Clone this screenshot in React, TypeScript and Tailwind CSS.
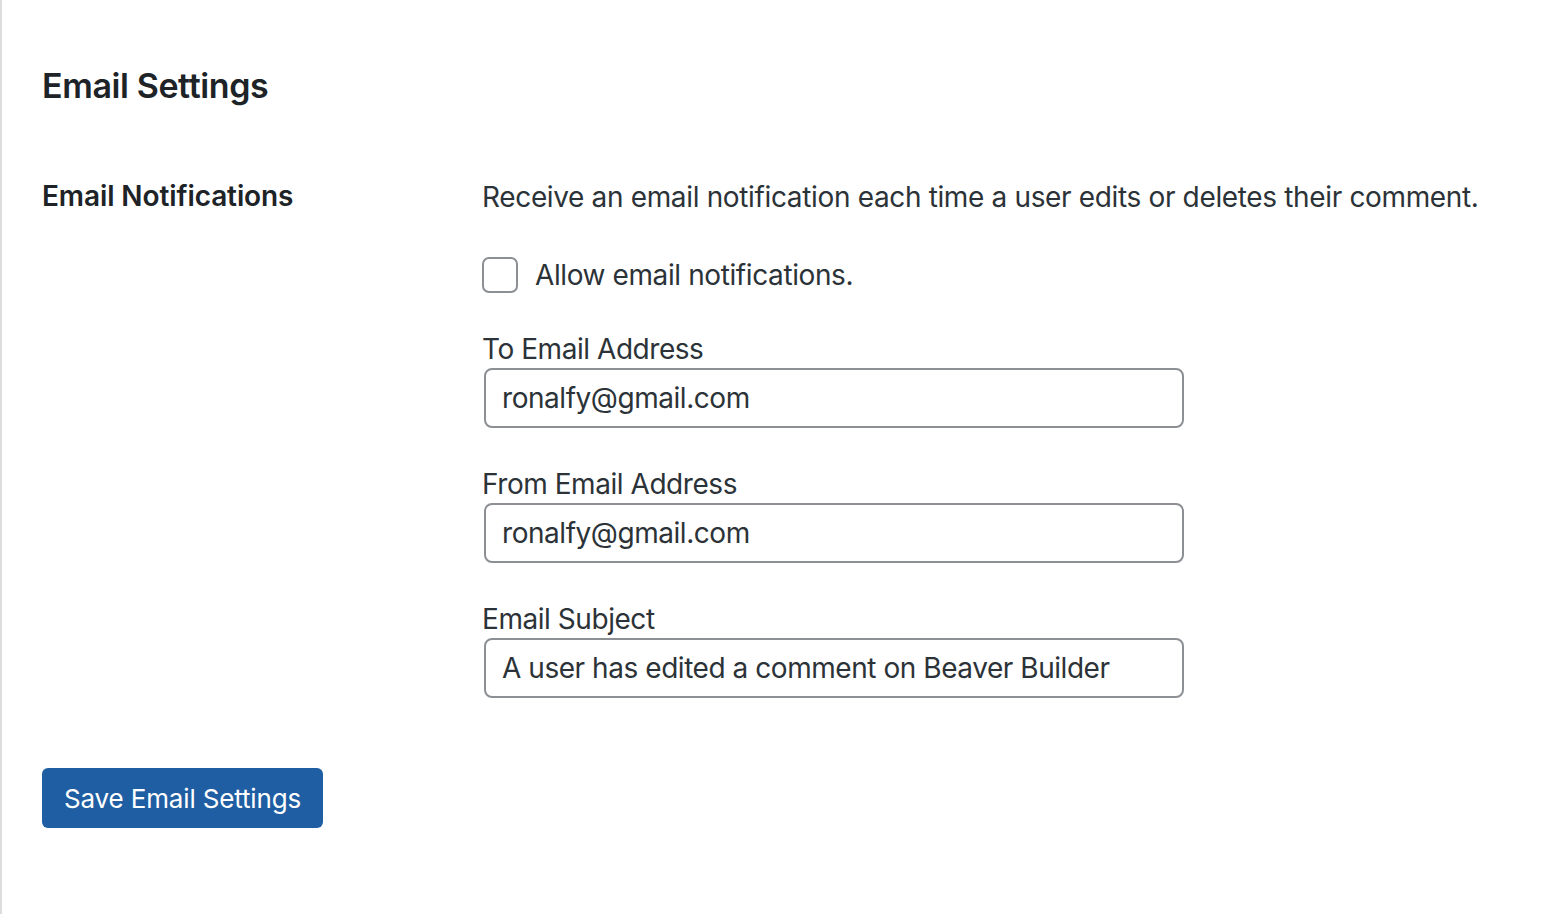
import { useState } from "react";

const fieldClass =
  "ml-[2px] block w-[700px] h-[60px] rounded-[8px] border-2 border-[#8c8f94] bg-white px-4 text-[28px] tracking-[-0.45px] text-[#2c3338] outline-none";

const labelClass = "block text-[28px] leading-[38px] tracking-[-0.45px]";

export default function App() {
  const [notify, setNotify] = useState(false);
  const [toEmail, setToEmail] = useState("ronalfy@gmail.com");
  const [fromEmail, setFromEmail] = useState("ronalfy@gmail.com");
  const [subject, setSubject] = useState("A user has edited a comment on Beaver Builder");

  return (
    <div className="min-h-screen bg-white border-l-2 border-[#dcdcde] pl-10 font-['Inter',sans-serif] text-[#2c3338]">
      <h2 className="pt-[66px] text-[34px] leading-[40px] font-semibold tracking-[-0.4px] text-[#1d2327]">
        Email Settings
      </h2>

      {/* Settings table */}
      <div className="mt-[69px] flex">
        <div className="mt-[1px] w-[440px] text-[28px] leading-[40px] font-semibold tracking-[-0.1px] text-[#1d2327]">
          Email Notifications
        </div>
        <div className="flex flex-col">
          <p className="mt-[2px] text-[28px] leading-[40px] tracking-[-0.35px]">
            Receive an email notification each time a user edits or deletes their comment.
          </p>

          <label className="mt-[38px] flex h-10 items-center gap-[17px] text-[28px] tracking-[-0.4px] cursor-pointer">
            <input
              type="checkbox"
              checked={notify}
              onChange={(e) => setNotify(e.target.checked)}
              className="appearance-none w-9 h-9 rounded-[7px] border-2 border-[#8c8f94] bg-white checked:bg-[#2271b1]"
            />
            Allow email notifications.
          </label>

          <label className={`mt-[35px] ${labelClass}`}>To Email Address</label>
          <input className={fieldClass} value={toEmail} onChange={(e) => setToEmail(e.target.value)} />

          <label className={`mt-[37px] ${labelClass}`}>From Email Address</label>
          <input className={fieldClass} value={fromEmail} onChange={(e) => setFromEmail(e.target.value)} />

          <label className={`mt-[37px] ${labelClass}`}>Email Subject</label>
          <input className={fieldClass} value={subject} onChange={(e) => setSubject(e.target.value)} />
        </div>
      </div>

      <button className="mt-[70px] h-[60px] rounded-[6px] bg-[#1f5ea2] px-[22px] text-[26px] tracking-[-0.15px] text-white cursor-pointer">
        Save Email Settings
      </button>
    </div>
  );
}
